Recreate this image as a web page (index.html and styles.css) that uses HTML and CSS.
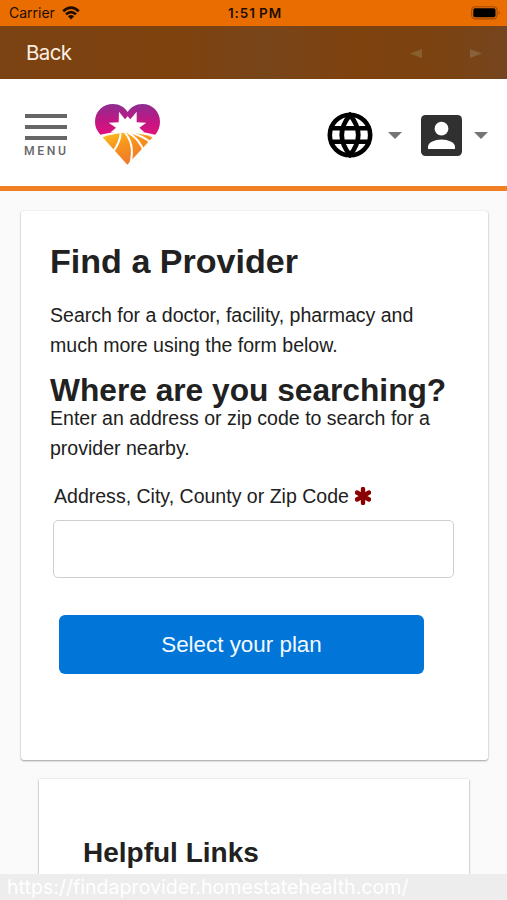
FILE: index.html
```
<!DOCTYPE html>
<html lang="en">
	<head>
		<meta charset="UTF-8">
		<title>Find a Provider</title>
		<link rel="stylesheet" href="styles.css">
	</head>
	<body>
		<div class="status-bar">
			<div class="carrier">
				<span>Carrier</span>
				<svg class="wifi" viewBox="0 0 18 14">
					<path d="M1.2 5.2Q9 -1.8 16.8 5.2M4 8.3Q9 3.8 14 8.3" fill="none" stroke="#1d0d00" stroke-width="2.6"/>
					<path d="M5.9 10.2Q9 7.6 12.1 10.2L9 13.6Z" fill="#1d0d00"/>
				</svg>
			</div>
			<span class="time">1:51 PM</span>
			<svg class="battery" viewBox="0 0 30 14">
				<rect x="0.7" y="0.7" width="25.4" height="12.2" rx="3.6" fill="none" stroke="#a24b00" stroke-width="1.1"/>
				<rect x="2.3" y="2.3" width="22.2" height="9" rx="1.8" fill="#000"/>
				<path d="M27.6 4.9Q30 6.8 27.6 8.7Z" fill="#a24b00"/>
			</svg>
		</div>
		<div class="nav-bar">
			<a class="back">Back</a>
			<div class="arrows">
				<svg viewBox="0 0 12 9"><path d="M12 0V9L0 4.5Z" fill="#88602f"/></svg>
				<svg viewBox="0 0 12 9"><path d="M0 0V9L12 4.5Z" fill="#88603a"/></svg>
			</div>
		</div>
		<header class="header">
			<div class="menu">
				<i></i>
				<i></i>
				<i></i>
				<span>MENU</span>
			</div>
			<svg class="logo" viewBox="285 75 195 183">
				<defs>
					<linearGradient id="pink" x1="0" y1="0" x2="0" y2="1">
						<stop offset="0" stop-color="#8d2d91"/>
						<stop offset="0.6" stop-color="#c51583"/>
						<stop offset="1" stop-color="#df117c"/>
					</linearGradient>
					<linearGradient id="gold" x1="0" y1="0" x2="0.5" y2="1">
						<stop offset="0" stop-color="#fcc21b"/>
						<stop offset="0.45" stop-color="#f7941e"/>
						<stop offset="1" stop-color="#f0782a"/>
					</linearGradient>
				</defs>
				<path d="M301 167C290 153 285 143 285 128C285 97 309 75 339 75C358 75 374 84 383 99C392 84 408 75 427 75C457 75 480 98 480 128C480 143 475 155 466 167Q424 156 383 157Q341 157 301 167Z" fill="url(#pink)"/>
				<path d="M332 160L348 146L326 131L356 130L357 98L375 121L383 112L391 121L410 98L410 130L439 131L418 146L433 160Z" fill="#fff"/>
				<path d="M308 175Q383 148 458 175L382 257Z" fill="url(#gold)"/>
				<path d="M362 163Q361 186 341 216M374 160Q406 196 391 254M383 160Q421 181 432 220M388 159Q432 172 457 194" fill="none" stroke="#fff" stroke-width="6"/>
			</svg>
			<div class="tools">
				<svg class="globe" viewBox="0 0 46 46">
					<g fill="none" stroke="#000" stroke-width="4.6">
						<circle cx="23" cy="23" r="20.2"/>
						<path d="M23 3Q6.500 23 23 43Q39.500 23 23 3Z"/>
						<path d="M4.500 16.200H41.500M4.500 29.800H41.500"/>
					</g>
				</svg>
				<b class="caret"></b>
				<svg class="user" viewBox="0 0 41 41">
					<rect width="41" height="41" rx="4.5" fill="#303030"/>
					<circle cx="20.5" cy="13.7" r="6.9" fill="#fff"/>
					<path d="M7 34V31.5C7 27.5 14 24.4 20.5 24.4S34 27.5 34 31.5V34Z" fill="#fff"/>
				</svg>
				<b class="caret"></b>
			</div>
		</header>
		<main>
			<section class="card search">
				<h1>Find a Provider</h1>
				<p class="intro">Search for a doctor, facility, pharmacy and<br>much more using the form below.</p>
				<h2>Where are you searching?</h2>
				<p class="hint">Enter an address or zip code to search for a<br>provider nearby.</p>
				<label for="address">
					<span>Address, City, County or Zip Code</span>
					<svg class="required" viewBox="0 0 16 18">
						<path d="M8 2V16M2 5.500L14 12.500M2 12.500L14 5.500" stroke="#8b0000" stroke-width="4.4" stroke-linecap="round"/>
					</svg>
				</label>
				<input type="text" id="address">
				<button type="button">Select your plan</button>
			</section>
			<section class="card links">
				<h3>Helpful Links</h3>
			</section>
		</main>
		<div class="url-bar">https://findaprovider.homestatehealth.com/</div>
	</body>
</html>
```
FILE: styles.css
```
* {
	box-sizing: border-box;
}
body {
	margin: 0;
	height: 900px;
	overflow: hidden;
	background-color: #fafafa;
	color: #212121;
	font-family: "Liberation Sans", Arial, sans-serif;
}
svg {
	display: block;
}
h1, h2, h3, p {
	margin: 0;
	white-space: nowrap;
}
.status-bar {
	display: grid;
	grid-template-columns: 1fr auto 1fr;
	align-items: center;
	height: 26px;
	padding: 0 6px 0 9px;
	background-color: #e96d00;
	color: #1d0d00;
	font: 14px/26px Inter, sans-serif;
}
.carrier {
	display: flex;
	align-items: center;
	gap: 7px;
}
.wifi {
	width: 18px;
	height: 14px;
}
.time {
	font-size: 13.5px;
	font-weight: 600;
	letter-spacing: 0.9px;
	word-spacing: -1px;
}
.battery {
	justify-self: end;
	width: 30px;
	height: 14px;
}
.nav-bar {
	display: flex;
	justify-content: space-between;
	align-items: center;
	height: 53px;
	padding: 0 25px 0 26px;
	background: linear-gradient(90deg, #7b4213 0%, #7e420e 35%, #78451a 52%, #7e420e 70%, #7b4312 88%, #75451f 100%);
}
.back {
	color: #fbeee0;
	font: 20.5px/53px Inter, sans-serif;
	letter-spacing: -0.6px;
}
.arrows {
	display: flex;
	gap: 48px;
	padding-top: 2px;
}
.arrows svg {
	width: 12px;
	height: 9px;
}
.header {
	display: flex;
	align-items: flex-start;
	height: 112px;
	padding: 25px 19px 0 25px;
	border-bottom: 5px solid #f08023;
	background-color: #fff;
}
.menu {
	width: 43px;
	padding-top: 10px;
}
.menu i {
	display: block;
	width: 42px;
	height: 4px;
	margin-bottom: 7px;
	background-color: #666;
}
.menu span {
	display: block;
	margin: -3px 0 0 -1px;
	color: #666;
	font: 500 12.2px/15px Roboto, sans-serif;
	letter-spacing: 2.6px;
}
.logo {
	width: 65px;
	height: 61px;
	margin-left: 27px;
}
.tools {
	display: flex;
	align-items: center;
	margin-left: auto;
	padding-top: 8px;
}
.globe {
	width: 46px;
	height: 46px;
}
.user {
	width: 41px;
	height: 41px;
	margin-left: 19px;
}
.caret {
	margin-left: 15px;
	border: 7px solid transparent;
	border-top-color: #757575;
	border-bottom: 0;
}
.user + .caret {
	margin-left: 12px;
}
.card {
	background-color: #fff;
	box-shadow: 0 1px 2px rgba(0, 0, 0, 0.35), 0 0 2px rgba(0, 0, 0, 0.1);
}
.search {
	width: 467px;
	height: 549px;
	margin: 20px 0 0 21px;
	padding: 29px 29px 0;
	border-radius: 3px;
}
h1 {
	font-size: 34.1px;
	line-height: 42px;
}
.intro, .hint, label {
	font-size: 19.55px;
	line-height: 29.5px;
}
.intro {
	margin-top: 19px;
}
h2 {
	margin-top: 13px;
	font-size: 31.7px;
	line-height: 34px;
}
.hint {
	margin-top: -3px;
}
label {
	display: flex;
	align-items: center;
	gap: 6px;
	margin: 19px 0 0 4px;
}
.required {
	width: 16px;
	height: 18px;
	margin-top: -2px;
}
input {
	display: block;
	width: 401px;
	height: 58px;
	margin: 8.5px 0 0 3px;
	border: 1px solid #ccd0d0;
	border-radius: 5px;
	background-color: #fff;
}
button {
	display: block;
	width: 365px;
	height: 59px;
	margin: 37px 0 0 9px;
	padding: 0;
	border: 0;
	border-radius: 6px;
	background-color: #0275d8;
	color: #f3faff;
	font: 22.4px/59px "Liberation Sans", Arial, sans-serif;
}
.links {
	width: 430px;
	height: 150px;
	margin: 19px 0 0 39px;
	padding: 57px 44px 0;
}
h3 {
	font-size: 28px;
	line-height: 34px;
}
.url-bar {
	position: fixed;
	left: 0;
	right: 0;
	bottom: 0;
	height: 26px;
	padding-left: 7px;
	background-color: #ededed;
	color: #fff;
	font: 19.6px/27px Inter, sans-serif;
}
```
